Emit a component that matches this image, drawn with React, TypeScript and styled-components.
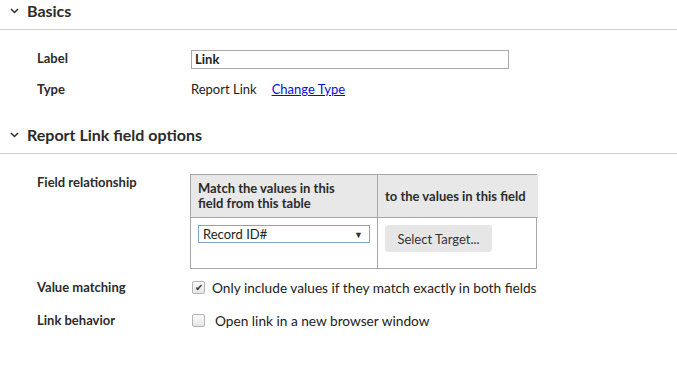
import styled, { createGlobalStyle } from "styled-components";

const GlobalStyle = createGlobalStyle`
  body {
    margin: 0;
    background: #fff;
    font-family: Lato, "Open Sans", sans-serif;
    color: #333;
  }
`;

const Page = styled.div`
  width: 677px;
`;

const SectionHead = styled.div`
  display: flex;
  align-items: center;
  gap: 8px;
  height: 20px;
  padding: 0 0 9px 10px;
  border-bottom: 1px solid #cfcfcf;
  font-size: 16px;
  font-weight: 700;
  color: #2b2b2b;
`;

const Body = styled.div<{ $top: number; $bottom: number }>`
  display: flex;
  flex-direction: column;
  gap: 10px;
  padding: ${(p) => p.$top}px 0 ${(p) => p.$bottom}px 37px;
`;

const Row = styled.div<{ $shift?: number }>`
  display: grid;
  grid-template-columns: 154px 1fr;
  align-items: center;
  min-height: 20px;
  margin-top: ${(p) => p.$shift ?? 0}px;
`;

const TopRow = styled(Row)`
  align-items: start;
`;

const Label = styled.div<{ $lift?: number }>`
  font-size: 13px;
  font-weight: 700;
  color: #2b2b2b;
  margin-top: ${(p) => -(p.$lift ?? 0)}px;
`;

const TextInput = styled.input`
  box-sizing: border-box;
  width: 318px;
  height: 19px;
  border: 1px solid #a9a9a9;
  padding: 0 3px;
  font-family: inherit;
  font-size: 13px;
  font-weight: 700;
  color: #222;
  outline: none;
`;

const Inline = styled.div`
  display: flex;
  align-items: center;
  gap: 15px;
  font-size: 13px;
  color: #222;
`;

const Link = styled.a`
  color: #0b0bd6;
  text-decoration: underline;
  font-size: 13px;
`;

const Table = styled.div`
  display: grid;
  grid-template-columns: 186px 161px;
  grid-template-rows: 43px 50px;
  width: 347px;
  border: 1px solid #a8a8a8;
  box-sizing: border-box;
  margin-left: -1px;
`;

const HeadCell = styled.div<{ $right?: boolean }>`
  display: flex;
  align-items: center;
  background: #e8e8e8;
  padding: ${(p) => (p.$right ? "0 6px 0 7px" : "0 24px 0 7px")};
  font-size: 13px;
  font-weight: 700;
  line-height: 15px;
  color: #2b2b2b;
  border-bottom: 1px solid #a8a8a8;
  border-left: ${(p) => (p.$right ? "1px solid #a8a8a8" : "none")};
`;

const Cell = styled.div<{ $right?: boolean }>`
  padding: 7px 7px 0 7px;
  border-left: ${(p) => (p.$right ? "1px solid #a8a8a8" : "none")};
`;

const Select = styled.div`
  box-sizing: border-box;
  width: 172px;
  height: 18px;
  border: 1px solid #7fa2d8;
  display: flex;
  align-items: center;
  justify-content: space-between;
  padding: 0 6px 0 4px;
  font-size: 13px;
  color: #222;
`;

const Arrow = styled.span`
  font-size: 9px;
  color: #333;
`;

const Button = styled.button`
  height: 27px;
  width: 107px;
  border: none;
  border-radius: 3px;
  background: #e6e6e6;
  font-family: inherit;
  font-size: 13px;
  color: #333;
  padding: 0;
`;

const Check = styled.label<{ $gap: number }>`
  display: flex;
  align-items: center;
  gap: ${(p) => p.$gap}px;
  font-size: 13.7px;
  color: #222;
  margin-left: 1px;
`;

const Box = styled.span`
  box-sizing: border-box;
  width: 13px;
  height: 13px;
  border: 1px solid #b4b4b4;
  border-radius: 2px;
  background: linear-gradient(#fbfbfb, #e6e6e6);
  display: flex;
  align-items: center;
  justify-content: center;
  font-size: 10px;
  line-height: 1;
  color: #333;
`;

const Chevron = () => (
  <svg width="9" height="7" viewBox="0 0 9 7">
    <path d="M1 2 L4.5 5.5 L8 2" fill="none" stroke="#2b2b2b" strokeWidth="1.5" />
  </svg>
);

export default function App() {
  return (
    <Page>
      <GlobalStyle />
      <SectionHead>
        <Chevron />
        Basics
      </SectionHead>
      <Body $top={19} $bottom={25}>
        <Row>
          <Label $lift={2}>Label</Label>
          <TextInput defaultValue="Link" />
        </Row>
        <Row>
          <Label>Type</Label>
          <Inline>
            <span>Report Link</span>
            <Link href="#">Change Type</Link>
          </Inline>
        </Row>
      </Body>
      <SectionHead>
        <Chevron />
        Report Link field options
      </SectionHead>
      <Body $top={20} $bottom={20}>
        <TopRow>
          <Label>Field relationship</Label>
          <Table>
            <HeadCell>Match the values in this field from this table</HeadCell>
            <HeadCell $right>to the values in this field</HeadCell>
            <Cell>
              <Select>
                <span>Record ID#</span>
                <Arrow>▼</Arrow>
              </Select>
            </Cell>
            <Cell $right>
              <Button>Select Target...</Button>
            </Cell>
          </Table>
        </TopRow>
        <Row $shift={-2}>
          <Label>Value matching</Label>
          <Check $gap={7}>
            <Box>✔</Box>
            Only include values if they match exactly in both fields
          </Check>
        </Row>
        <Row $shift={3}>
          <Label>Link behavior</Label>
          <Check $gap={10}>
            <Box />
            Open link in a new browser window
          </Check>
        </Row>
      </Body>
    </Page>
  );
}
